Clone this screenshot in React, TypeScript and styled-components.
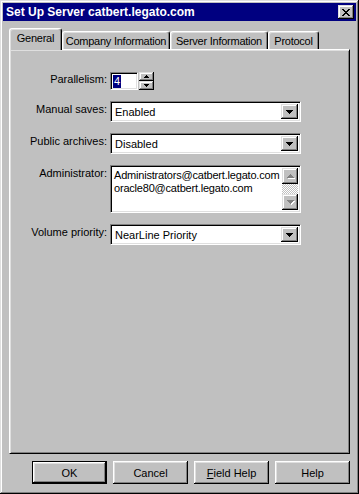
import styled, { createGlobalStyle, css } from "styled-components";

const GlobalStyle = createGlobalStyle`
  html, body {
    margin: 0;
    padding: 0;
    background: #c0c0c0;
  }
  body {
    font-family: "Liberation Sans", Arial, sans-serif;
    font-size: 11px;
    color: #000;
  }
`;

// classic 3d borders
const raised = css`
  background: #c0c0c0;
  box-shadow: inset -1px -1px #000, inset 1px 1px #dfdfdf, inset -2px -2px #808080,
    inset 2px 2px #fff;
`;

const sunken = css`
  box-sizing: border-box;
  background: #fff;
  border: 1px solid;
  border-color: #808080 #fff #fff #808080;
  box-shadow: inset 1px 1px #000, inset -1px -1px #dfdfdf;
`;

interface ArrowProps {
  dir: "up" | "down";
  base: number;
  disabled?: boolean;
}

function Arrow({ dir, base, disabled }: ArrowProps) {
  const rows = (base + 1) / 2;
  const rects = [];
  for (let i = 0; i < rows; i++) {
    const w = dir === "down" ? base - 2 * i : 1 + 2 * i;
    rects.push({ x: (base - w) / 2, y: i, w });
  }
  return (
    <svg width={base + 1} height={rows + 1} shapeRendering="crispEdges">
      {disabled &&
        rects.map((r) => (
          <rect key={"s" + r.y} x={r.x + 1} y={r.y + 1} width={r.w} height={1} fill="#fff" />
        ))}
      {rects.map((r) => (
        <rect
          key={r.y}
          x={r.x}
          y={r.y}
          width={r.w}
          height={1}
          fill={disabled ? "#808080" : "#000"}
        />
      ))}
    </svg>
  );
}

function CloseGlyph() {
  const rows = [
    [0, 1, 6, 7],
    [1, 2, 5, 6],
    [2, 3, 4, 5],
    [3, 4],
    [2, 3, 4, 5],
    [1, 2, 5, 6],
    [0, 1, 6, 7],
  ];
  return (
    <svg width={8} height={7} shapeRendering="crispEdges">
      {rows.map((xs, y) =>
        xs.map((x) => <rect key={y + "-" + x} x={x} y={y} width={1} height={1} fill="#000" />)
      )}
    </svg>
  );
}

function App() {
  return (
    <>
      <GlobalStyle />
      <Window>
        <TitleBar>
          <TitleText>Set Up Server catbert.legato.com</TitleText>
          <CloseButton>
            <CloseGlyph />
          </CloseButton>
        </TitleBar>

        <Body>
          <TabRow>
            <Tab $active $w={53}>General</Tab>
            <Tab $w={108}>Company Information</Tab>
            <Tab $w={98}>Server Information</Tab>
            <Tab $w={51}>Protocol</Tab>
          </TabRow>

          <Panel>
            <Form>
              <Label $top={1}>Parallelism:</Label>
              <SpinRow>
                <SpinInput>
                  <Selected>4</Selected>
                </SpinInput>
                <SpinButtons>
                  <SpinButton>
                    <Arrow dir="up" base={5} />
                  </SpinButton>
                  <SpinButton>
                    <Arrow dir="down" base={5} />
                  </SpinButton>
                </SpinButtons>
              </SpinRow>

              <Label>Manual saves:</Label>
              <Combo>
                <ComboText>Enabled</ComboText>
                <DropButton>
                  <Arrow dir="down" base={7} />
                </DropButton>
              </Combo>

              <Label>Public archives:</Label>
              <Combo>
                <ComboText>Disabled</ComboText>
                <DropButton>
                  <Arrow dir="down" base={7} />
                </DropButton>
              </Combo>

              <Label>Administrator:</Label>
              <ListBox>
                <ListLines>
                  <div>Administrators@catbert.legato.com</div>
                  <div>oracle80@catbert.legato.com</div>
                </ListLines>
                <ScrollBar>
                  <ScrollButton>
                    <Arrow dir="up" base={7} disabled />
                  </ScrollButton>
                  <ScrollTrack />
                  <ScrollButton>
                    <Arrow dir="down" base={7} disabled />
                  </ScrollButton>
                </ScrollBar>
              </ListBox>

              <Label>Volume priority:</Label>
              <Combo>
                <ComboText>NearLine Priority</ComboText>
                <DropButton>
                  <Arrow dir="down" base={7} />
                </DropButton>
              </Combo>
            </Form>
          </Panel>

          <ButtonRow>
            <DialogButton $default>OK</DialogButton>
            <DialogButton>Cancel</DialogButton>
            <DialogButton>
              <u>F</u>ield Help
            </DialogButton>
            <DialogButton>Help</DialogButton>
          </ButtonRow>
        </Body>
      </Window>
    </>
  );
}

const Window = styled.div`
  box-sizing: border-box;
  width: 359px;
  height: 494px;
  padding: 3px;
  display: flex;
  flex-direction: column;
  ${raised}
`;

const TitleBar = styled.div`
  height: 18px;
  display: flex;
  align-items: center;
  justify-content: space-between;
  padding: 0 2px 0 3px;
  background: #000080;
`;

const TitleText = styled.div`
  color: #fff;
  font-weight: bold;
  font-size: 12px;
  white-space: nowrap;
`;

const CloseButton = styled.div`
  width: 16px;
  height: 14px;
  display: flex;
  align-items: center;
  justify-content: center;
  ${raised}
`;

const Body = styled.div`
  flex: 1;
  display: flex;
  flex-direction: column;
  padding: 7px 6px 0 6px;
`;

const TabRow = styled.div`
  display: flex;
  align-items: flex-end;
  height: 21px;
  position: relative;
  z-index: 1;
`;

const Tab = styled.div<{ $active?: boolean; $w: number }>`
  box-sizing: border-box;
  width: ${(p) => p.$w}px;
  height: ${(p) => (p.$active ? 22 : 18)}px;
  margin-bottom: ${(p) => (p.$active ? -1 : 0)}px;
  padding-bottom: ${(p) => (p.$active ? 3 : 0)}px;
  display: flex;
  align-items: center;
  justify-content: center;
  white-space: nowrap;
  letter-spacing: -0.25px;
  background: #c0c0c0;
  border-top: 1px solid #fff;
  border-left: 1px solid #fff;
  border-right: 1px solid #000;
  border-radius: 3px 3px 0 0;
  box-shadow: inset -1px 0 #808080, inset 1px 1px #dfdfdf;
  position: relative;
  z-index: ${(p) => (p.$active ? 2 : 1)};
`;

const Panel = styled.div`
  flex: 1;
  box-sizing: border-box;
  border: 1px solid;
  border-color: #fff #000 #000 #fff;
  box-shadow: inset 1px 1px #dfdfdf, inset -1px -1px #808080;
`;

const Form = styled.div`
  display: grid;
  grid-template-columns: 97px 191px;
  column-gap: 3px;
  row-gap: 11px;
  padding-top: 22px;
`;

const Label = styled.div<{ $top?: number }>`
  text-align: right;
  padding-top: ${(p) => p.$top ?? 2}px;
  white-space: nowrap;
`;

const SpinRow = styled.div`
  display: flex;
  gap: 1px;
  height: 18px;
`;

const SpinInput = styled.div`
  ${sunken}
  width: 28px;
  height: 18px;
  padding: 2px 0 0 2px;
`;

const Selected = styled.span`
  display: inline-block;
  background: #000080;
  color: #fff;
  padding: 0 1px;
  line-height: 13px;
`;

const SpinButtons = styled.div`
  display: flex;
  flex-direction: column;
  width: 15px;
`;

const SpinButton = styled.div`
  flex: 1;
  display: flex;
  align-items: center;
  justify-content: center;
  padding-left: 1px;
  ${raised}
`;

const Combo = styled.div`
  ${sunken}
  height: 21px;
  display: flex;
  align-items: stretch;
  padding: 2px;
`;

const ComboText = styled.div`
  flex: 1;
  display: flex;
  align-items: center;
  padding-left: 2px;
  padding-top: 1px;
`;

const DropButton = styled.div`
  width: 16px;
  display: flex;
  align-items: center;
  justify-content: center;
  padding: 1px 0 0 1px;
  ${raised}
`;

const ListBox = styled.div`
  ${sunken}
  height: 48px;
  display: flex;
  padding: 2px;
`;

const ListLines = styled.div`
  flex: 1;
  padding: 1px 0 0 1px;
  line-height: 13px;
  letter-spacing: -0.2px;
  white-space: nowrap;
  overflow: hidden;
`;

const ScrollBar = styled.div`
  width: 16px;
  display: flex;
  flex-direction: column;
`;

const ScrollButton = styled.div`
  height: 16px;
  display: flex;
  align-items: center;
  justify-content: center;
  padding-left: 1px;
  ${raised}
`;

const ScrollTrack = styled.div`
  flex: 1;
  background-color: #fff;
  background-image: conic-gradient(#c0c0c0 25%, #fff 0 50%, #c0c0c0 0 75%, #fff 0);
  background-size: 2px 2px;
`;

const ButtonRow = styled.div`
  display: flex;
  justify-content: flex-end;
  gap: 6px;
  margin: 7px 0 7px;
`;

const DialogButton = styled.div<{ $default?: boolean }>`
  box-sizing: border-box;
  width: 75px;
  height: 23px;
  display: flex;
  align-items: center;
  justify-content: center;
  background: #c0c0c0;
  box-shadow: inset -1px -1px #000, inset 1px 1px #fff, inset -2px -2px #808080,
    inset 2px 2px #dfdfdf;
  ${(p) =>
    p.$default &&
    css`
      border: 1px solid #000;
    `}
`;

export default App;
